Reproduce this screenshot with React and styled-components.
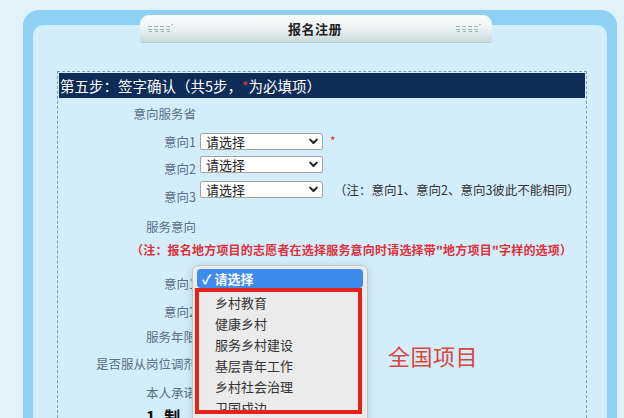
import React from "react";
import styled, { createGlobalStyle } from "styled-components";

const Global = createGlobalStyle`
  html, body { margin: 0; padding: 0; }
  body {
    background: #e2f2fb;
    font-family: "Noto Sans CJK SC", "Noto Sans", sans-serif;
    overflow: hidden;
  }
`;

const Page = styled.div`
  position: relative;
  width: 624px;
  height: 418px;
  overflow: hidden;
  background: #e2f2fb;
`;

const Frame = styled.div`
  margin: 10px 0 0 23px;
  width: 574px;
  height: 393px;
  padding: 15px 10px 0;
  background: #8fd0f5;
  border-radius: 16px 16px 0 0;
`;

const Inner = styled.div`
  height: 100%;
  background: #d3edfb;
  border-radius: 10px 10px 0 0;
  display: flex;
  flex-direction: column;
`;

const Tab = styled.div`
  flex: none;
  margin: -10px 0 0 107px;
  width: 352px;
  height: 27px;
  border-radius: 9px 9px 3px 3px;
  background: linear-gradient(#fbfdfd 0%, #eef4f4 45%, #c9dcdc 100%);
  box-shadow: 0 1px 0 #b4cccc;
  display: flex;
  align-items: center;
  justify-content: space-between;
  padding: 0 10px 0 8px;
  box-sizing: border-box;
`;

const TabTitle = styled.span`
  font-size: 13px;
  font-weight: 700;
  color: #222;
  letter-spacing: 0.5px;
`;

const DashedBox = styled.div`
  flex: none;
  margin: 29px 0 0 24px;
  width: 526px;
  height: 360px;
  border: 1px dashed #8d9aa6;
  border-bottom: none;
  padding: 1px 1px 0;
`;

const StepBar = styled.div`
  height: 25px;
  background: #0d2c57;
  color: #fff;
  font-size: 14.5px;
  line-height: 25px;
  padding-left: 1px;
  white-space: nowrap;
`;

const Star = styled.span`
  color: #e0303a;
  font-size: ${(p) => p.$size || 12}px;
`;

const Form = styled.div`
  padding-top: 2px;
  display: flex;
  flex-direction: column;
`;

const Row = styled.div`
  flex: none;
  height: ${(p) => p.$h}px;
  display: flex;
  align-items: ${(p) => (p.$center ? "center" : "flex-start")};
  gap: 4px;
`;

const Label = styled.div`
  width: 137px;
  flex: none;
  text-align: right;
  font-size: 12.5px;
  line-height: 17px;
  color: #5b6e85;
  padding-top: ${(p) => p.$pt || 0}px;
  white-space: nowrap;
`;

const SelectBox = styled.div`
  margin-top: ${(p) => p.$mt || 0}px;
  width: 123px;
  height: 17px;
  box-sizing: border-box;
  border: 1px solid #a3a3a3;
  border-radius: 2px;
  background: #fff;
  display: flex;
  align-items: center;
  justify-content: space-between;
  padding: 0 4px 0 5px;
  font-size: 13px;
  color: #222;
`;

const Note = styled.div`
  margin-top: ${(p) => p.$mt || 0}px;
  margin-left: ${(p) => p.$ml || 0}px;
  font-size: ${(p) => (p.$red ? 12 : 12.5)}px;
  letter-spacing: ${(p) => (p.$red ? 0.2 : 0)}px;
  line-height: 16px;
  color: ${(p) => (p.$red ? "#e0303a" : "#333")};
  font-weight: ${(p) => (p.$red ? 700 : 400)};
  white-space: nowrap;
`;

const Pledge = styled.div`
  margin: 5px 0 0 87px;
  font-size: 16px;
  font-weight: 700;
  color: #111;
  line-height: 20px;
  white-space: nowrap;
`;

const Popup = styled.div`
  position: absolute;
  left: 192px;
  top: 265px;
  width: 176px;
  height: 170px;
  box-sizing: border-box;
  background: #ebebeb;
  border: 1px solid #c4c4c4;
  border-radius: 6px;
  box-shadow: 0 2px 8px rgba(0, 0, 0, 0.15);
  padding: 3px 4px 0 2px;
`;

const Highlight = styled.div`
  margin-left: 2px;
  height: 19px;
  border-radius: 4px;
  background: #3d8bec;
  color: #fff;
  font-size: 13px;
  font-weight: 700;
  line-height: 19px;
  padding-left: 5px;
  display: flex;
  gap: 3px;
`;

const RedBox = styled.div`
  width: 167px;
  height: 126px;
  box-sizing: border-box;
  border: 4px solid #e3221c;
  padding: 0 0 0 16px;
  overflow: hidden;
`;

const Item = styled.div`
  font-size: 13px;
  line-height: 21px;
  color: #333;
  white-space: nowrap;
`;

const Callout = styled.div`
  position: absolute;
  left: 388px;
  top: 340px;
  font-size: 22px;
  line-height: 30px;
  color: #d9463e;
  letter-spacing: 0.5px;
`;

const Chevron = () => (
  <svg width="9" height="7" viewBox="0 0 9 7">
    <path d="M1.2 1.6 L4.5 5 L7.8 1.6" fill="none" stroke="#222" strokeWidth="2" strokeLinecap="round" strokeLinejoin="round" />
  </svg>
);

const Deco = () => (
  <svg width="26" height="10" viewBox="0 0 26 10">
    {[0, 6, 12, 18].map((x) => (
      <g key={x} fill="#9ab3b3">
        <rect x={x} y="2" width="4" height="1" />
        <rect x={x} y="5" width="4" height="1" />
        <rect x={x + 1} y="7" width="3" height="1" />
      </g>
    ))}
    <path d="M23 1 L25 0" stroke="#9ab3b3" strokeWidth="1" />
  </svg>
);

const Select = ({ mt }) => (
  <SelectBox $mt={mt}>
    <span>请选择</span>
    <Chevron />
  </SelectBox>
);

const items = ["乡村教育", "健康乡村", "服务乡村建设", "基层青年工作", "乡村社会治理", "卫国戍边"];

export default function App() {
  return (
    <Page>
      <Global />
      <Frame>
        <Inner>
          <Tab>
            <Deco />
            <TabTitle>报名注册</TabTitle>
            <Deco />
          </Tab>
          <DashedBox>
            <StepBar>
              第五步：签字确认（共5步，<Star $size={14}>*</Star>为必填项）
            </StepBar>
            <Form>
              <Row $h={26} $center>
                <Label>意向服务省</Label>
              </Row>
              <Row $h={26}>
                <Label $pt={7}>意向1</Label>
                <Select mt={7} />
                <Note $mt={7} $ml={3}><Star>*</Star></Note>
              </Row>
              <Row $h={24}>
                <Label $pt={8}>意向2</Label>
                <Select mt={4} />
              </Row>
              <Row $h={30}>
                <Label $pt={12}>意向3</Label>
                <Select mt={5} />
                <Note $mt={6} $ml={7}>（注：意向1、意向2、意向3彼此不能相同）</Note>
              </Row>
              <Row $h={36}>
                <Label $pt={11.5}>服务意向</Label>
              </Row>
              <Row $h={16}>
                <Note $red $ml={72}>（注：报名地方项目的志愿者在选择服务意向时请选择带"地方项目"字样的选项）</Note>
              </Row>
              <Row $h={40}>
                <Label $pt={16.5}>意向1</Label>
                <Select mt={17} />
              </Row>
              <Row $h={27}>
                <Label $pt={4.5}>意向2</Label>
                <Select mt={4} />
              </Row>
              <Row $h={26}>
                <Label $pt={2.5}>服务年限</Label>
              </Row>
              <Row $h={28}>
                <Label $pt={3.5}>是否服从岗位调剂</Label>
              </Row>
              <Row $h={22}>
                <Label $pt={4.5}>本人承诺</Label>
              </Row>
              <Pledge>1. 制</Pledge>
            </Form>
          </DashedBox>
        </Inner>
      </Frame>
      <Popup>
        <Highlight>
          <span>✓</span>
          <span>请选择</span>
        </Highlight>
        <RedBox>
          {items.map((t) => (
            <Item key={t}>{t}</Item>
          ))}
        </RedBox>
      </Popup>
      <Callout>全国项目</Callout>
    </Page>
  );
}
